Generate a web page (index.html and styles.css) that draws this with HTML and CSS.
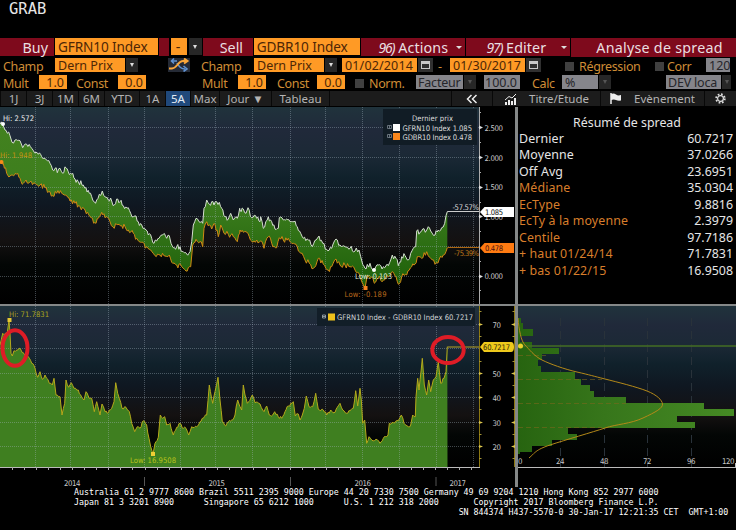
FILE: index.html
```html
<!DOCTYPE html>
<html lang="fr">
<head>
<meta charset="utf-8">
<title>Analyse de spread</title>
<link rel="stylesheet" href="styles.css">
</head>
<body>
<header class="grab">GRAB</header>

<div class="row head">
  <div class="red buy">Buy</div>
  <div class="field ticker">GFRN10 Index</div>
  <div class="red stub"></div>
  <div class="field minus">-</div>
  <div class="drop tall"></div>
  <div class="red sell">Sell</div>
  <div class="field ticker second">GDBR10 Index</div>
  <div class="red menu"><i>96)</i> Actions<b></b></div>
  <div class="red menu edit"><i>97)</i> Editer<b></b></div>
  <div class="red title">Analyse de spread</div>
</div>

<div class="row opts">
  <span class="lab w52">Champ</span>
  <div class="field w70">Dern Prix</div><div class="drop"></div>
  <svg class="shuffle" width="22" height="14" viewBox="0 0 22 14"><rect width="22" height="14" fill="#252a35"/><path d="M9 3H4M6 .5 3.500 3 6 5.500M9 5q3 6 8 6M15.500 8l3.500 3-3.500 2.500" fill="none" stroke="#5f92d2" stroke-width="1.600"/><path d="M1 10.500h3C9 10.500 10 3 15 3h4M16 .5 19.500 3 16 5.500" fill="none" stroke="#f9a63a" stroke-width="2"/></svg>
  <span class="lab w53">Champ</span>
  <div class="field w70">Dern Prix</div><div class="drop"></div>
  <div class="field date first">01/02/2014</div>
  <div class="cal"></div>
  <span class="lab dash">-</span>
  <div class="field date">01/30/2017</div>
  <div class="cal"></div>
  <span class="box reg"></span><span class="lab w76">Régression</span>
  <span class="box"></span><span class="lab w38">Corr</span>
  <div class="field off w24">120</div>
</div>

<div class="row opts">
  <span class="lab w36">Mult</span><div class="field num w28">1.0</div>
  <span class="lab w42 l9">Const</span><div class="field num w28">0.0</div>
  <span class="lab w37 l55">Mult</span><div class="field num w28">1.0</div>
  <span class="lab w41 l10">Const</span><div class="field num w28">0.0</div>
  <span class="box norm"></span><span class="lab w47">Norm.</span>
  <div class="field off w47 tight">Facteur</div><div class="drop dim"></div>
  <div class="field off num w36 l7">100.0</div>
  <span class="lab w30 l12">Calc</span>
  <div class="field off w36">%</div><div class="drop dim"></div>
  <div class="field off w55 l57 tight">DEV loca</div><div class="drop dim slim"></div>
</div>

<nav class="tabs">
  <div>1J</div><div>3J</div><div>1M</div><div>6M</div><div>YTD</div><div>1A</div><div class="on">5A</div><div>Max</div><div>Jour ▼</div><div>Tableau</div><div></div>
  <div><svg width="12" height="10" viewBox="0 0 12 10"><path d="M5.500 1 1.500 5l4 4M10.500 1l-4 4 4 4" fill="none" stroke="#eee" stroke-width="1.500"/></svg></div>
  <div><svg class="ic" width="13" height="12" viewBox="0 0 13 12"><path d="M1 7l4-3.500L8 5l4-4" fill="none" stroke="#eee"/><path d="M1 12V9h2v3zM4 12V7h2v5zM7 12V8h2v4zM10 12V5h2v7z" fill="#eee"/></svg>Titre/Etude</div>
  <div><svg class="ic" width="12" height="11" viewBox="0 0 12 11"><path d="M1 0v11" stroke="#eee" stroke-width="1.500"/><path d="M1 1q3-1 5 .5t5 .5v5.500q-3 .5-5-.5T1 7z" fill="#eee"/></svg>Evènement</div>
  <div><svg width="11" height="11" viewBox="0 0 11 11"><circle cx="5.500" cy="5.500" r="4.300" fill="none" stroke="#ddd" stroke-width="1.800" stroke-dasharray="1.700 1.680"/><circle cx="5.500" cy="5.500" r="2.900" fill="none" stroke="#ddd" stroke-width="1.200"/></svg></div>
</nav>

<main class="panes">
  <section class="pane">
    <svg id="prices" width="515" height="197" viewBox="0 107 515 197">
      <defs>
        <linearGradient id="sky" x1="0" y1="0" x2="0" y2="1"><stop offset="0" stop-color="#20333c"/><stop offset=".12" stop-color="#20293a"/><stop offset=".24" stop-color="#1c2936"/><stop offset=".36" stop-color="#10212b"/><stop offset=".5" stop-color="#0f1721"/><stop offset=".68" stop-color="#141111"/><stop offset=".8" stop-color="#030605"/><stop offset="1" stop-color="#000"/></linearGradient>
        <linearGradient id="leaf" gradientUnits="userSpaceOnUse" x1="0" y1="120" x2="0" y2="285"><stop offset="0" stop-color="#43821f"/><stop offset=".5" stop-color="#3c7d1d"/><stop offset="1" stop-color="#1e600a"/></linearGradient>
      </defs>
      <rect y="107" width="480" height="197" fill="url(#sky)"/>
      <path id="band" fill="url(#leaf)"/>
      <g class="grid"></g>
      <path id="low" class="series" stroke="#d18a13"/>
      <path id="high" class="series" stroke="#d5ded0"/>
      <path d="M447.500 212V211.500H480" fill="none" stroke="#ccc"/>
      <path d="M447.500 247.500H480" stroke="#ad6813"/>
      <path d="M479.500 107V304" stroke="#aaa"/>
      <g class="ticks"></g>
      <g class="axis">
        <text x="484.500" y="130.500" textLength="18.500">2.500</text><text x="484.500" y="160.500" textLength="18.500">2.000</text><text x="484.500" y="190" textLength="18.500">1.500</text><text x="484.500" y="220" textLength="18.500">1.000</text><text x="484.500" y="279" textLength="18.500">0.000</text>
      </g>
      <path d="M480 212l4.500-5H514v10h-29.500z" fill="#fff"/><text x="485" y="215" textLength="18" fill="#111">1.085</text>
      <path d="M480 248l4.500-5H514v10h-29.500z" fill="#ff7b12"/><text x="485" y="251" textLength="18" fill="#411">0.478</text>
      <text x="452.500" y="210" textLength="26.500" fill="#d4d4d4">-57.57%</text>
      <text x="454" y="256" textLength="25" fill="#bd7619">-75.39%</text>
      <rect x="383" y="109" width="94" height="36" fill="#111c25"/>
      <g fill="#ddd"><text x="412" y="121" textLength="41">Dernier prix</text><text x="402.500" y="130.500" textLength="69.500">GFRN10 Index 1.085</text><text x="402.500" y="139.500" textLength="69.500">GDBR10 Index 0.478</text></g>
      <rect x="393" y="124" width="7" height="7" fill="#fff"/><rect x="393" y="133" width="7" height="7" fill="#f8861c"/>
      <path d="M387.500 125.500h4v3h-4zM389.500 125.500v3M387.500 134.500h4v3h-4zM389.500 134.500v3" fill="none" stroke="#7c8790" stroke-width=".8"/>
      <text x="3" y="120.500" textLength="31" fill="#eee">Hi: 2.572</text><circle cx="3" cy="124" r="2" fill="#fff"/>
      <text x="0" y="158" textLength="32" fill="#c2930f">Hi: 1.948</text><circle cx="1.500" cy="162" r="2" fill="#f78b1a"/>
      <circle cx="374" cy="270" r="2" fill="#fff"/><text x="355" y="279" textLength="37" fill="#dfe6d4">Low: 0.103</text>
      <rect x="363.500" y="286" width="4" height="4" fill="#f58220"/><text x="344.500" y="296.500" textLength="42" fill="#b9691c">Low: -0.189</text>
    </svg>
  </section>
  <section class="pane stats">
    <h2>Résumé de spread</h2>
    <dl>
      <dt>Dernier</dt><dd>60.7217</dd>
      <dt>Moyenne</dt><dd>37.0266</dd>
      <dt>Off Avg</dt><dd>23.6951</dd>
      <dt class="o">Médiane</dt><dd>35.0304</dd>
      <dt class="o">EcType</dt><dd>9.8816</dd>
      <dt class="o">EcTy à la moyenne</dt><dd>2.3979</dd>
      <dt class="o">Centile</dt><dd>97.7186</dd>
      <dt class="o">+ haut 01/24/14</dt><dd>71.7831</dd>
      <dt class="o">+ bas 01/22/15</dt><dd>16.9508</dd>
    </dl>
  </section>
  <section class="pane">
    <svg id="spread" width="515" height="181" viewBox="0 306 515 181">
      <rect y="306" width="480" height="161" fill="url(#sky)"/>
      <path id="area" fill="#3f7f20"/>
      <g class="grid"></g>
      <path id="line" class="series" stroke="#b5a91b"/>
      <path d="M447.500 347H480" stroke="#b8a224"/>
      <path d="M0 467.500H480" stroke="#bbb"/>
      <path d="M479.500 306V467M514.500 306V467" stroke="#8b7711"/>
      <g class="ticks"></g>
      <g class="axis">
        <text x="492.500" y="327.500" textLength="8.500">70</text><text x="492.500" y="376.500" textLength="8.500">50</text><text x="492.500" y="401" textLength="8.500">40</text><text x="492.500" y="425.500" textLength="8.500">30</text><text x="492.500" y="450" textLength="8.500">20</text>
        <text x="64" y="485.500" textLength="16.500">2014</text><text x="208.500" y="485.500" textLength="16.500">2015</text><text x="354.500" y="485.500" textLength="16.500">2016</text><text x="449.500" y="485.500" textLength="16.500">2017</text>
      </g>
      <path d="M144.500 477v9M290.500 477v9M436 477v9" stroke="#555"/>
      <path d="M480 347l4-5h27q3 0 3 5t-3 5h-27z" fill="#eec91c"/><text x="483" y="350" textLength="27" fill="#332a05">60.7217</text>
      <rect x="317" y="308" width="158" height="18" fill="#121e28"/>
      <path d="M322.500 315h3v3h-3zM322.500 316.500h3" fill="none" stroke="#a3adb5" stroke-width=".8"/><rect x="328" y="313.500" width="7" height="7" fill="#eec11c"/>
      <text x="337" y="320" textLength="136" fill="#d0d3d6">GFRN10 Index - GDBR10 Index 60.7217</text>
      <text x="9" y="317" textLength="40" fill="#aaa31d">Hi: 71.7831</text><rect x="7.500" y="318" width="4" height="4" fill="#e5c634"/>
      <text x="130" y="463" textLength="46" fill="#b9c11c">Low: 16.9508</text><rect x="151" y="452" width="4" height="4" fill="#f1cf34"/>
      <ellipse cx="15" cy="348" rx="12.500" ry="17.800" class="mark"/><ellipse cx="448" cy="350" rx="15.700" ry="13" class="mark"/>
    </svg>
  </section>
  <section class="pane">
    <svg id="dist" width="218" height="181" viewBox="518 306 218 181">
      <defs><linearGradient id="bar" gradientUnits="userSpaceOnUse" x1="518" y1="0" x2="735" y2="0"><stop offset="0" stop-color="#276410"/><stop offset=".4" stop-color="#37761b"/><stop offset="1" stop-color="#458a24"/></linearGradient></defs>
      <rect x="518" y="306" width="218" height="161" fill="url(#sky)"/>
      <path d="M560.500 318V467M604.500 318V467M647.500 318V467M691.500 318V467" stroke="#29323a" stroke-dasharray="8 5"/>
      <g id="bars" fill="url(#bar)"></g>
      <path d="M518 346H736" stroke="#456e23" stroke-width="1.500"/>
      <path d="M518 355.500h28M518 379.500h84M518 403.500h108M518 427.500h84" stroke="#7f681d" stroke-dasharray="5 3" stroke-width=".8" opacity=".7"/>
      <path d="M518 318C519 330 521 341 525 345S534 356 542 360S564 369 577 372S593 376 605 379S637 387 647 391S662 400 662.500 404S656 412 643 418S617 424 605 428S565 440 550 445S535 453 529 458" fill="none" stroke="#b48918"/>
      <circle cx="520.500" cy="346" r="2.500" fill="#e9d02a"/>
      <path d="M518 467.500H736M735.500 463v5" stroke="#bbb"/>
      <g class="axis"><text x="518" y="464">0</text><text x="556" y="464" textLength="8.500">24</text><text x="600" y="464" textLength="8.500">48</text><text x="643" y="464" textLength="8.500">72</text><text x="687" y="464" textLength="8.500">96</text><text x="722" y="464" textLength="12.500">120</text></g>
    </svg>
  </section>
</main>

<footer><pre>Australia 61 2 9777 8600 Brazil 5511 2395 9000 Europe 44 20 7330 7500 Germany 49 69 9204 1210 Hong Kong 852 2977 6000
Japan 81 3 3201 8900      Singapore 65 6212 1000      U.S. 1 212 318 2000       Copyright 2017 Bloomberg Finance L.P.
                                                                             SN 844374 H437-5570-0 30-Jan-17 12:21:35 CET  GMT+1:00</pre></footer>
<script src="chart.js"></script>
</body>
</html>
```
FILE: styles.css
```css
*, ::after { box-sizing: border-box; }
body { margin: 0; width: 736px; height: 530px; overflow: hidden; background: #000; font-family: "Noto Sans", sans-serif; }
.grab { height: 38px; padding: 0 0 0 9px; font: 15.5px/19px "DejaVu Sans Mono", monospace; color: #e6e6e6; }
.row { display: flex; align-items: flex-start; white-space: nowrap; }
.head { height: 20px; font-size: 14.3px; line-height: 19px; }
.red { height: 18px; background: #7e0a1c; color: #eadfe0; }
.field { height: 14px; background: #ff9a25; color: #4d2606; padding-left: 3px; line-height: 15px; }
.head .field { height: 17px; line-height: 18px; }
.buy { width: 54px; text-align: right; padding-right: 6px; }
.ticker { width: 103px; margin-left: 1px; letter-spacing: -.1px; font-size: 13.6px; }
.ticker.second { width: 106px; margin-left: 1px; }
.stub { width: 10px; margin-left: 1px; }
.minus { width: 16px; margin-left: 2px; padding-left: 5px; }
.drop { width: 12px; height: 14px; margin-left: 1px; background: #272727; display: flex; align-items: center; justify-content: center; flex: none; }
.drop::after { content: ""; border: 2.5px solid transparent; border-top: 4px solid #ddd; border-bottom: 0; }
.drop.tall { width: 13px; height: 17px; margin-left: 2px; }
.drop.dim::after { border-top-color: #555; }
.drop.slim { width: 9px; }
.sell { width: 50px; padding-left: 17px; margin-left: 1px; }
.menu { width: 105px; margin-left: 1px; padding: 0 3px 0 18px; letter-spacing: .1px; }
.menu i { font-style: italic; font-size: 14px; letter-spacing: -1.2px; }
.menu b { float: right; margin-top: 8px; border: 3px solid transparent; border-top-color: #ddd; border-bottom: 0; }
.edit { width: 104px; padding-left: 20px; }
.title { width: 165px; height: 19px; line-height: 20px; margin-left: 1px; padding-left: 25px; letter-spacing: .25px; }
.opts { height: 17px; font-size: 12.5px; line-height: 16px; }
.lab { color: #cf8d36; padding-left: 3px; letter-spacing: -.35px; flex: none; line-height: 17px; }
.w24 { width: 24px; } .w28 { width: 28px; } .w30 { width: 30px; } .w36 { width: 36px; } .w37 { width: 37px; }
.w38 { width: 42px; } .w41 { width: 41px; } .w42 { width: 42px; } .w47 { width: 47px; } .w52 { width: 55px; }
.w53 { width: 53px; } .w55 { width: 55px; } .w70 { width: 70px; } .w76 { width: 81px; }
.w36.lab { width: 39px; }
.l7 { margin-left: 8px; } .l9 { margin-left: 6px; width: 45px; } .l10 { margin-left: 8px; width: 43px; }
.l12 { margin-left: 9px; width: 33px; } .l55 { margin-left: 53px; width: 39px; } .l57 { margin-left: 55px; }
.shuffle { margin-left: 30px; margin-right: 8px; flex: none; }
.lab.w53 { width: 56px; }
.num { text-align: right; padding: 0 3px 0 0; }
.date { width: 75px; letter-spacing: .15px; }
.date.first { margin-left: 5px; }
.cal { width: 15px; height: 14px; margin-left: 1px; background: #303030; padding: 3px; }
.cal::after { content: ""; display: block; width: 9px; height: 8px; border: 1px solid #c9c9c9; border-top-width: 3px; }
.dash { width: 17px; padding-left: 5px; }
.box { width: 9px; height: 9px; margin-top: 4px; background: #404040; flex: none; }
.reg { margin-left: 24px; }
.reg + .lab { padding-left: 5px; }
.norm { margin-left: 10px; }
.norm + .lab { padding-left: 5px; width: 52px; }
.off { background: #85858b; color: #26262a; }
.tight { padding-left: 2px; letter-spacing: -.2px; }
.tabs { height: 15px; display: grid; grid-template-columns: 25px 25px 25px 25px 34px 25px 24px 28px 51px 57px 121px 40px 107px 103px 1fr; gap: 1px; margin-top: -1px; padding-left: 1px; font-size: 11.5px; line-height: 15px; color: #b4b4b4; background: #080808; white-space: nowrap; }
.tabs div { background: #1c1c1c; display: flex; align-items: center; justify-content: center; }
.tabs .on { background: #20497b; color: #e4ecf5; }
.ic { margin-right: 12px; flex: none; }
.panes { display: grid; grid-template-columns: 515px 218px; grid-template-rows: 197px 181px; gap: 2px 3px; background: #858888; margin-top: 1px; }
.pane { background: #000; overflow: hidden; }
svg { display: block; }
svg text { font: 7.6px "DejaVu Sans Condensed", "DejaVu Sans", sans-serif; }
.axis text { fill: #c8c8c8; font-size: 7.8px; }
.series { fill: none; stroke-width: 1; }
.mark { fill: none; stroke: #df1c26; stroke-width: 4; }
#bars { shape-rendering: crispEdges; }
.stats { color: #e6e6e6; font-size: 12.4px; }
.stats h2 { margin: 7px 0 0; font-weight: 400; font-size: 12.4px; line-height: 17px; text-align: center; }
.stats dl { margin: 0; padding: 0 3px 0 1px; display: grid; grid-template-columns: 1fr auto; grid-auto-rows: 16.45px; line-height: 16px; }
.stats dt { letter-spacing: .12px; }
.stats dd { margin: 0; text-align: right; }
.stats .o { color: #d87e2b; }
footer { height: 43px; }
pre { margin: 0; padding-left: 74px; font: 8.3px/10px "DejaVu Sans Mono", monospace; color: #fff; }
```
FILE: chart.js
```js
const NS = "http://www.w3.org/2000/svg";
let seed = 11;
const rnd = () => (seed = (seed * 16807) % 2147483647) / 2147483647 - 0.5;

// Anchors are stored at three units per pixel, as two runs that start at x = 0 and x = 240.
function build(a, b, top, amp) {
  const pts = [];
  const add = (run, off) => run.trim().split(/\s+/).forEach(p => {
    const [x, y] = p.split(",").map(Number);
    pts.push([off + x / 3, top + y / 3]);
  });
  add(a, 0);
  add(b, 240);
  pts.sort((p, q) => p[0] - q[0]);
  const out = [];
  pts.forEach((p, i) => {
    out.push(p);
    const q = pts[i + 1];
    if (!q) return;
    const n = Math.floor((q[0] - p[0]) / 1.1);
    for (let k = 1; k < n; k++) {
      const t = k / n;
      out.push([p[0] + (q[0] - p[0]) * t, p[1] + (q[1] - p[1]) * t + rnd() * amp]);
    }
  });
  return out;
}
const str = pts => pts.map(p => p[0].toFixed(1) + " " + p[1].toFixed(1)).join("L");
const set = (id, d) => document.getElementById(id).setAttribute("d", d);

const high = build(
  "0,58 8,60 15,75 22,85 30,92 36,112 45,105 60,107 68,128 80,118 95,130 108,142 115,148 125,155 135,160 150,175 158,195 165,190 172,203 180,190 188,205 198,188 205,200 215,207 225,222 235,230 250,240 258,248 268,265 275,275 283,290 290,285 298,268 307,258 315,275 325,285 335,288 343,300 350,282 360,290 370,302 385,308 392,325 400,335 408,333 415,350 425,360 438,375 445,390 455,400 462,415 470,408 480,395 490,388 500,400 508,392 513,415 520,428 530,425 540,425 550,440 560,447 570,440 575,410 580,360 588,340 597,350 608,355 612,310 620,285 628,298 635,290 642,300 650,290 658,292 665,310 675,335 685,342 692,325 700,345 712,340 719,310",
  "0,315 10,312 18,325 24,308 35,338 50,340 60,350 62,335 70,370 85,335 95,350 105,372 115,370 118,338 130,345 140,342 150,350 162,350 172,365 182,385 190,400 205,405 217,425 228,405 237,393 248,415 260,433 275,430 288,402 300,420 315,425 330,430 345,438 357,435 362,455 368,478 378,492 390,475 403,495 415,480 430,485 445,482 457,450 468,460 475,482 485,455 495,452 505,465 512,445 520,430 527,425 530,378 540,382 548,372 556,382 565,365 572,378 585,390 595,375 605,368 614,355 622,320", 105, 5.5);
const low = build(
  "0,170 10,175 20,205 30,213 40,212 50,208 60,220 70,235 78,225 90,230 105,235 120,240 135,248 150,260 158,272 170,265 185,265 200,272 210,288 225,295 240,305 255,315 270,335 288,355 295,340 305,322 315,338 330,350 343,370 350,358 365,362 375,365 385,375 400,385 410,400 425,412 440,425 452,435 465,452 480,450 495,453 508,450 518,475 530,480 545,485 558,498 565,488 572,485 578,420 588,403 600,410 608,425 612,370 620,350 628,360 635,372 645,358 655,395 662,360 672,385 685,388 700,395 712,410 719,385",
  "0,375 10,382 18,380 24,385 38,412 50,405 62,408 72,430 85,395 95,415 110,428 118,398 130,405 145,400 160,415 172,425 182,445 195,465 208,475 220,490 235,460 250,478 265,495 275,485 288,462 300,480 315,480 330,485 345,495 357,505 365,530 376,545 382,510 395,515 403,535 415,520 430,525 445,515 458,500 468,515 475,538 485,515 500,510 515,485 525,478 532,455 545,460 560,440 572,460 585,478 598,462 610,450 622,428", 105, 5.5);
set("high", "M" + str(high));
set("low", "M" + str(low));
set("band", "M" + str(high) + "L" + str(low.slice().reverse()) + "Z");

const gap = build(
  "0,135 8,100 16,100 22,98 27,60 30,100 33,160 37,168 42,152 50,150 60,145 70,158 85,170 95,190 105,205 113,232 120,215 127,238 135,225 148,250 157,255 162,235 168,285 180,290 186,345 194,310 198,240 206,262 214,248 222,265 235,270 245,292 252,300 258,275 268,295 275,295 283,335 290,305 300,345 306,312 315,335 325,338 335,325 342,305 347,248 353,280 358,295 366,325 378,322 388,335 395,370 404,395 412,380 420,385 430,362 440,375 447,415 452,440 459,462 465,430 475,412 481,345 488,355 494,350 500,375 510,370 520,405 530,382 540,370 550,385 558,385 566,405 575,380 590,380 600,365 610,355 620,345 628,255 638,310 645,275 654,232 660,300 667,365 677,378 685,365 695,360 705,345 713,300 718,315",
  "0,320 5,330 10,255 15,285 22,310 37,285 45,308 60,312 72,335 80,318 88,345 98,345 104,335 115,350 125,355 135,335 145,318 160,305 166,348 175,342 180,360 187,345 193,325 199,288 207,320 218,320 227,280 235,328 250,330 260,345 272,330 282,338 292,322 300,310 308,330 320,340 330,332 340,325 347,272 353,318 360,265 364,300 368,370 374,360 380,430 387,410 395,420 408,418 420,430 430,415 444,405 448,370 460,368 475,362 484,345 492,370 505,380 512,375 518,345 526,350 528,290 533,235 537,270 547,175 553,255 560,285 566,240 572,275 580,240 588,230 595,185 602,250 612,235 618,215 622,140", 300, 3);
set("line", "M" + str(gap));
set("area", "M" + str(gap) + "L447.500 467L0 467Z");

function draw(parent, tag, attrs) {
  const el = document.createElementNS(NS, tag);
  for (const k in attrs) el.setAttribute(k, attrs[k]);
  parent.appendChild(el);
}
const cols = [35.5, 70.5, 108.5, 144.5, 180.5, 215.5, 252.5, 290.5, 325.5, 362.5, 399.5, 436.5, 473.5];
function grid(id, top, bottom, rows) {
  const g = document.querySelector("#" + id + " .grid");
  let d = cols.map(x => `M${x} ${top}V${bottom}`).join("");
  d += rows.map(y => `M0 ${y}H479`).join("");
  draw(g, "path", { d, stroke: "#a9b9c4", "stroke-opacity": 0.38, "stroke-dasharray": "1 1" });
}
grid("prices", 107, 304, [127.5, 157.5, 187.5, 216.5, 246.5, 276.5]);
grid("spread", 306, 467, [324.5, 348.5, 373.5, 397.5, 422.5, 446.5]);

const t1 = document.querySelector("#prices .ticks");
[127.5, 157.5, 187.5, 216.5, 276.5].forEach(y => draw(t1, "path", { d: `M479 ${y - 2}l4 2-4 2z`, fill: "#ddd" }));
[112.5, 142.5, 172.5, 202.5, 231.5, 261.5, 290.5].forEach(y => draw(t1, "path", { d: `M479 ${y}h2`, stroke: "#aaa" }));
const t2 = document.querySelector("#spread .ticks");
[324.5, 373.5, 397.5, 422.5, 446.5].forEach(y => draw(t2, "path", { d: `M479 ${y - 1.5}l4 1.500-4 1.500zM515 ${y - 1.5}l-4 1.500 4 1.500z`, fill: "#d8c24a" }));
[311.5, 336.5, 361.5, 385.5, 409.5, 434.5, 458.5].forEach(y => draw(t2, "path", { d: `M479 ${y}h2.500M515 ${y}h-2.500`, stroke: "#a39235" }));
for (let x = 11.5; x < 479; x += 12.1) draw(t2, "path", { d: `M${Math.round(x) + 0.5} 467v3`, stroke: "#aaa" });

const bars = [[53, 32], [70, 40], [88, 70], [107, 30], [125, 67], [143, 147], [162, 97], [180, 84], [198, 93], [217, 195], [236, 213], [254, 240], [272, 252], [291, 348], [309, 582], [327, 671], [347, 502], [366, 555], [384, 174], [402, 202], [419, 125], [438, 65], [456, 30], [462, 30]];
const host = document.getElementById("bars");
bars.slice(0, -1).forEach(([y, x], i) => {
  const y0 = Math.round(300 + y / 3);
  draw(host, "rect", { x: 518, y: y0, width: x / 3 - 8, height: Math.round(300 + bars[i + 1][0] / 3) - y0 });
});
```
